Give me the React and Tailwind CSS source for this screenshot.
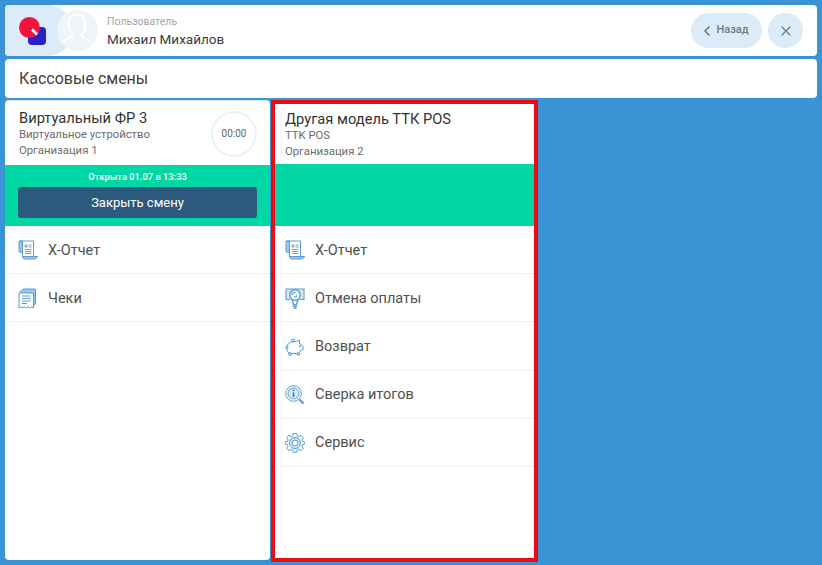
import { ChevronLeft, X } from "lucide-react"

const stroke = "#5a9ad0"
const fill = "#d5e8f7"

function ReportIcon() {
  return (
    <svg width="20" height="21" viewBox="0 0 20 21" fill="none" stroke={stroke} strokeWidth="1">
      <path d="M1 1h3.500v11.500H2.500C1.500 12.500 1 12 1 11z" fill="#9cc8ea" />
      <path d="M2 1h13.500v15.500H4.500V1" fill="#fff" />
      <path d="M4.500 16.500h15c-.8 1.800-1.500 2.500-3 2.500H6.500c-1.300 0-2-1-2-2.500z" fill="#9cc8ea" />
      <path d="M7 5h2v2H7zM10.500 5h3M10.500 7h3M7 9.500h6.500M7 11.500h6.500M7 13.500h6.500" strokeWidth="0.8" stroke="#4a8cc4" />
    </svg>
  )
}

function ReceiptIcon() {
  return (
    <svg width="20" height="22" viewBox="0 0 20 22" fill="none" stroke={stroke} strokeWidth="1">
      <path d="M1.500 4 6 1h11.500v15l-2.500 2" fill="#9cc8ea" />
      <path d="M1 5h14.500v15l-1.800-1.200-1.800 1.200-1.800-1.200-1.800 1.200-1.800-1.200L4.700 20l-1.800-1.200L1 20z" fill="#fff" />
      <path d="M4 8h8.500M4 10.500h8.500M4 13h8.500M4 15.500h5" strokeWidth="0.9" stroke="#4a8cc4" />
    </svg>
  )
}

function CancelIcon() {
  return (
    <svg width="20" height="21" viewBox="0 0 20 21" fill="none" stroke={stroke} strokeWidth="1.100">
      <path d="M5 11.500H1V1h18v10.500h-4" fill={fill} />
      <circle cx="10" cy="7" r="5.200" fill="#fff" strokeWidth="1.500" />
      <path d="M7 7c0-2 2-3 3.500-2.500M9 8.500c1.500 1 3 .3 3-1.500" />
      <path d="M7 11.500 8.500 16.500h3l1.500-5" strokeWidth="1.400" />
      <path d="M7.800 18.200h4.400M8.500 20h3" strokeWidth="1.400" />
    </svg>
  )
}

function PiggyIcon() {
  return (
    <svg width="19" height="18" viewBox="0 0 19 18" fill="none" stroke={stroke} strokeWidth="1">
      <path d="M2 8c1-3 4-4.500 7-4.500h2.500L14.500 2v3.500C16 6 17.500 7 18 8.500v3l-2 .5c-.5 1.500-1.500 2.500-3 3.500H5c-2-1-3-2.500-3-4.500z" fill="#fff" />
      <circle cx="8" cy="2.500" r="1.500" fill={fill} />
      <circle cx="1.800" cy="9.500" r="1.300" fill={fill} />
      <circle cx="5" cy="16" r="1.400" fill={fill} />
      <circle cx="13.500" cy="16" r="1.400" fill={fill} />
      <circle cx="15" cy="8" r="0.600" fill={stroke} />
    </svg>
  )
}

function SearchInfoIcon() {
  return (
    <svg width="20" height="20" viewBox="0 0 20 20" fill="none" stroke={stroke} strokeWidth="1">
      <circle cx="8.500" cy="8.500" r="7.800" />
      <circle cx="8.500" cy="8.500" r="5.500" fill={fill} />
      <path d="M8.500 4.800v1.200M8.500 7.500v4.500" stroke="#2f6fa6" strokeWidth="1.500" />
      <path d="m14.500 14.500 4 4" strokeWidth="2.400" />
    </svg>
  )
}

function GearIcon() {
  return (
    <svg width="20" height="20" viewBox="0 0 20 20" fill="none" stroke={stroke} strokeWidth="1">
      <path d="M8.200.6h3.600l.5 2.600 1.500.6 2.200-1.500 2.400 2.400-1.500 2.200.6 1.500 2.500.5v2.200l-2.500.5-.6 1.500 1.500 2.200-2.400 2.400-2.200-1.500-1.500.6-.5 2.500H8.200l-.5-2.500-1.500-.6L4 17.700l-2.400-2.400 1.500-2.200-.6-1.500L0 11.100V8.900l2.500-.5.6-1.500-1.500-2.200L4 2.300l2.200 1.500 1.500-.6z" fill="#fff" />
      <circle cx="10" cy="10" r="5.500" fill={fill} />
      <circle cx="10" cy="10" r="3" fill="#fff" />
    </svg>
  )
}

function Logo() {
  return (
    <svg width="28" height="28" viewBox="0 0 28 28">
      <rect x="9" y="10" width="18" height="18" rx="4" fill="#2a22c9" />
      <circle cx="10.500" cy="10.500" r="10.500" fill="#f0143f" />
      <path d="m13 12.500 5 5" stroke="#fff" strokeWidth="2.600" />
    </svg>
  )
}

function Avatar() {
  return (
    <svg width="40" height="40" viewBox="0 0 40 40" fill="none" stroke="#fff" strokeWidth="1.800">
      <path d="M20 4c5.500 0 8.500 4 8.500 9 0 4-1.500 7.500-3.500 9.500v3c2 2 8 3 10 7M20 4c-5.500 0-8.500 4-8.500 9 0 4 1.500 7.500 3.500 9.500v3c-2 2-8 3-10 7" />
    </svg>
  )
}

function MenuRow({ icon, label, pad }) {
  return (
    <div className={`flex h-[48.200px] items-center border-b border-[#eef0f2] pt-[2px] ${pad}`}>
      <div className="flex w-[30px] shrink-0 items-center">{icon}</div>
      <span className="text-[14.500px] text-[#505050]">{label}</span>
    </div>
  )
}

function CardHead({ title, line1, line2 }) {
  return (
    <div>
      <div className="text-[14.700px] leading-[18px] font-[450] text-[#333]">{title}</div>
      <div className="text-[11.300px] leading-[15.500px] text-[#6b6b6b]">{line1}</div>
      <div className="text-[11.300px] leading-[15.500px] text-[#6b6b6b]">{line2}</div>
    </div>
  )
}

export default function App() {
  return (
    <main className="flex h-screen w-full flex-col overflow-hidden bg-[#3993d5] px-[5px] pt-[5px] font-['Roboto',sans-serif]">
      <header className="relative flex h-[51px] shrink-0 items-center overflow-hidden rounded-[4px] bg-white pr-[14px]">
        <div className="absolute top-0 left-0 h-[51px] w-[68px] rounded-r-[40px] bg-[#dcebf8]" />
        <div className="absolute top-[5px] left-[52px] h-[41px] w-[41px] rounded-full bg-[#eef4fa]" />
        <div className="relative ml-[14px] w-[38px] shrink-0">
          <Logo />
        </div>
        <div className="relative flex h-[40px] w-[40px] shrink-0 items-center justify-center">
          <Avatar />
        </div>
        <div className="relative ml-[10px]">
          <div className="mt-[1px] text-[10.500px] leading-[14px] text-[#a0a6ab]">Пользователь</div>
          <div className="mt-[1px] text-[13.500px] leading-[18px] font-[450] text-[#3c3c3c]">Михаил Михайлов</div>
        </div>
        <div className="relative ml-auto flex items-center gap-[6px]">
          <button className="flex h-[35px] w-[71px] items-center justify-center gap-[1px] rounded-full bg-[#dcebf8] pr-[5px] text-[11px] font-medium text-[#6c7a85]">
            <ChevronLeft size={16} strokeWidth={2.500} />
            Назад
          </button>
          <button className="flex h-[35px] w-[35px] items-center justify-center rounded-full bg-[#dcebf8] text-[#6c7a85]">
            <X size={16} strokeWidth={1.800} />
          </button>
        </div>
      </header>

      <div className="mt-[3px] flex h-[39px] shrink-0 items-center rounded-[4px] bg-white px-[14px] pt-[1px] text-[16px] text-[#404040]">
        Кассовые смены
      </div>

      <div className="mt-[2px] flex h-[462px] shrink-0 items-start gap-[1px]">
        <section className="flex h-[460px] w-[265px] shrink-0 flex-col overflow-hidden rounded-[4px] border-t border-[#dcebf8] bg-white">
          <div className="flex h-[64px] items-center justify-between pt-[1px] pr-[13px] pl-[14px]">
            <CardHead title="Виртуальный ФР 3" line1="Виртуальное устройство" line2="Организация 1" />
            <div className="flex h-[46px] w-[46px] items-center justify-center rounded-full border-2 border-[#e8f1f9] text-[10px] text-[#666]">
              00:00
            </div>
          </div>
          <div className="flex h-[61px] flex-col items-center bg-[#00d7a5] px-[13px] pt-[5px]">
            <div className="text-[9.300px] leading-[13px] font-semibold text-[#e9fbf6]">Открыта 01.07 в 13:33</div>
            <button className="mt-[4px] h-[31px] w-full rounded-[3px] bg-[#2c5a7e] text-[13px] font-[450] text-white">
              Закрыть смену
            </button>
          </div>
          <MenuRow pad="pl-[13px]" icon={<ReportIcon />} label="Х-Отчет" />
          <MenuRow pad="pl-[13px]" icon={<ReceiptIcon />} label="Чеки" />
        </section>

        <section className="flex h-[462px] w-[267px] shrink-0 flex-col border-4 border-[#ec0a14] bg-white">
          <div className="flex h-[60px] items-start pt-[6px] pl-[10px]">
            <CardHead title="Другая модель ТТК POS" line1="TTK POS" line2="Организация 2" />
          </div>
          <div className="h-[62px] bg-[#00d7a5]" />
          <MenuRow pad="pl-[10px]" icon={<ReportIcon />} label="Х-Отчет" />
          <MenuRow pad="pl-[10px]" icon={<CancelIcon />} label="Отмена оплаты" />
          <MenuRow pad="pl-[10px]" icon={<PiggyIcon />} label="Возврат" />
          <MenuRow pad="pl-[10px]" icon={<SearchInfoIcon />} label="Сверка итогов" />
          <MenuRow pad="pl-[10px]" icon={<GearIcon />} label="Сервис" />
        </section>
      </div>
    </main>
  )
}
